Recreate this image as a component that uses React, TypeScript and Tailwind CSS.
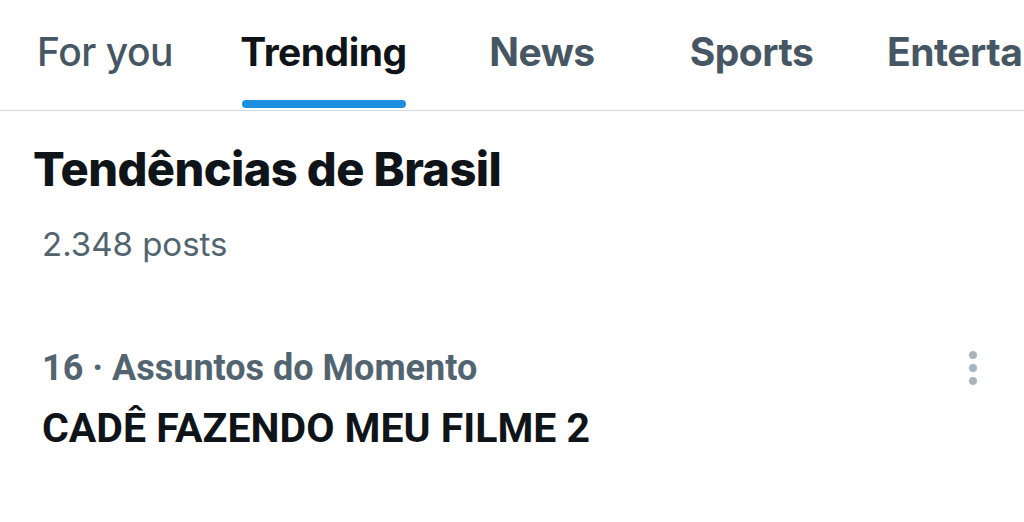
import React from 'react';

const tabs = [
  { label: 'For you', w: 'w-[210px]', active: false },
  { label: 'Trending', w: 'w-[227px]', active: true },
  { label: 'News', w: 'w-[210px]', active: false },
  { label: 'Sports', w: 'w-[209px]', active: false },
];

export default function App() {
  return (
    <div className="w-[1024px] h-[522px] bg-white overflow-hidden" style={{ fontFamily: 'Inter, "Noto Sans", sans-serif' }}>
      {/* Tabs */}
      <div className="flex h-[111px] border-b border-[#cfd9de] overflow-hidden whitespace-nowrap">
        {tabs.map((t) => (
          <div key={t.label} className={`${t.w} shrink-0 relative flex justify-center pt-[23px]`}>
            <span
              className={
                t.active
                  ? 'text-[39px] font-bold text-[#0f1419] tracking-[-0.5px]'
                  : t.label === 'For you'
                  ? 'text-[39px] font-medium text-[#475663] tracking-[-0.5px]'
                  : 'text-[39px] font-bold text-[#475663] tracking-[-0.5px]'
              }
            >
              {t.label}
            </span>
            {t.active && (
              <div className="absolute bottom-[2px] left-1/2 -translate-x-1/2 w-[164px] h-[8px] rounded-full bg-[#1d8fe0]" />
            )}
          </div>
        ))}
        <div className="shrink-0 pl-[31px] pt-[23px]">
          <span className="text-[39px] font-bold text-[#475663] tracking-[-0.5px]">Entertainment</span>
        </div>
      </div>

      {/* Heading */}
      <div className="pl-[33px] pt-[30px]">
        <h1 className="text-[47px] leading-[56px] font-extrabold text-[#0f1419] tracking-[-0.6px]">Tendências de Brasil</h1>
        <p className="pl-[9px] mt-[27px] text-[33px] leading-[40px] text-[#536471]">2.348 posts</p>
      </div>

      {/* Trend item */}
      <div className="flex items-start justify-between pl-[42px] pr-[46px] mt-[83px]" style={{ fontFamily: 'Roboto, "Liberation Sans", sans-serif' }}>
        <div className="flex flex-col">
          <span className="text-[36px] leading-[42px] font-bold text-[#536471]">16 · Assuntos do Momento</span>
          <span className="mt-[16px] text-[41px] leading-[46px] font-bold text-[#0f1419]">CADÊ FAZENDO MEU FILME 2</span>
        </div>
        <svg width="10" height="38" viewBox="0 0 10 38" className="mt-[3px]">
          <circle cx="5" cy="5" r="4" fill="#aab4bd" />
          <circle cx="5" cy="18" r="4" fill="#aab4bd" />
          <circle cx="5" cy="31" r="4" fill="#aab4bd" />
        </svg>
      </div>
    </div>
  );
}
